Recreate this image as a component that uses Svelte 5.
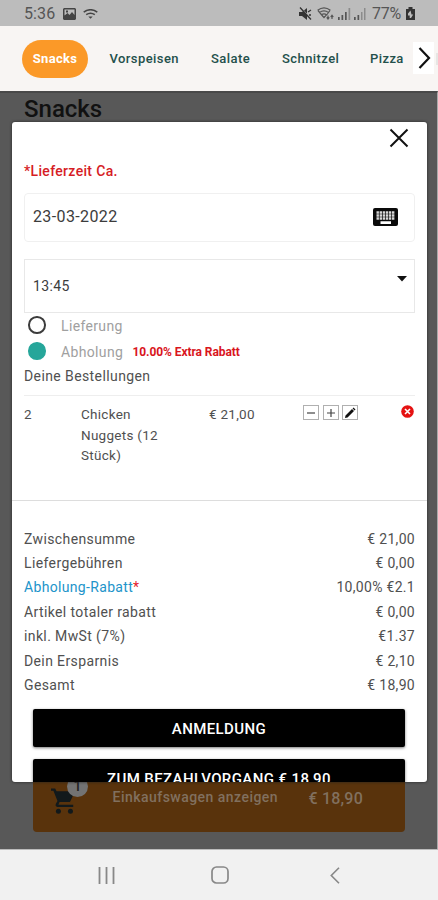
<script>
  const tabs = ['Vorspeisen', 'Salate', 'Schnitzel', 'Pizza'];
  const totals = [
    { label: 'Zwischensumme', value: '€ 21,00' },
    { label: 'Liefergebühren', value: '€ 0,00' },
    { label: 'Abholung-Rabatt', value: '10,00% €2.1', link: true },
    { label: 'Artikel totaler rabatt', value: '€ 0,00' },
    { label: 'inkl. MwSt (7%)', value: '€1.37' },
    { label: 'Dein Ersparnis', value: '€ 2,10' },
    { label: 'Gesamt', value: '€ 18,90' }
  ];
</script>

<div class="phone">
  <header class="status">
    <span class="clock">5:36</span>
    <svg class="photo" width="13" height="12" viewBox="0 0 13 12"><path fill="#444" fill-rule="evenodd" d="M1 0h11l1 1v10l-1 1H1l-1-1V1zM1.500 1.500v6l3-2.500 2 2 2.500-3 2.500 3v-5.500zM3 2.500h2v2H3z" /></svg>
    <svg class="wifi" width="15" height="10" viewBox="0 0 15 10" fill="none" stroke="#444" stroke-width="1.500"><path d="M.7 3.200Q7.500-1.800 14.300 3.200M3.200 5.700q4.300-3 8.600 0" /><path d="M5.300 7.400h4.400L7.500 9.700z" fill="#444" stroke="none" /></svg>
    <div class="right">
      <svg width="13" height="14" viewBox="0 0 13 14"><path fill="#333" d="M0 5h3l5-4v12L3 9H0z" /><path d="M1.500 0l11 12" stroke="#bcbcbc" stroke-width="1" /><path d="M1 .5l11 12M9 5l3-2M10 8h2" fill="none" stroke="#333" stroke-width="1.300" /></svg>
      <svg class="wf" width="17" height="13" viewBox="0 0 17 13" fill="none" stroke="#555" stroke-width="1.200"><path d="M.6 3.200Q7 -1.600 13.400 3.200M2.500 5.500q4.500-3.200 9 0M4.500 7.800q2.500-1.700 5 0L7 10.500zM1 3.500l5 6M13 3.500l-3 4" /><path d="M11 8.500v3M9.700 10.300L11 12l1.300-1.700M15 12V8.500M13.700 10L15 8.300 16.300 10" /></svg>
      <svg class="sig" width="28" height="12" viewBox="0 0 28 12"><path fill="#555" d="M0 9h1.700v3H0zM3.500 7h1.700v5H3.500zM7 4h1.700v8H7zM16 9h1.700v3H16zM19.500 7h1.700v5h-1.700z" /><path fill="#8b8b8b" d="M10.500 0h1.700v12h-1.700zM23 4h1.500v8H23zM26 0h1.500v12H26z" /></svg>
      <span class="pct">77%</span>
      <svg class="bat" width="9" height="13" viewBox="0 0 9 13"><path fill="#333" fill-rule="evenodd" d="M2.500 0h4v2H9v11H0V2h2.500zM4.500 3.500L2 6.500v2h1.700V11H5L7.200 7.500H5.500z" /></svg>
    </div>
  </header>

  <nav class="tabs">
    <button class="active">Snacks</button>
    {#each tabs as t, i}
      <span class="tab t{i}">{t}</span>
    {/each}
    <div class="next">
      <svg width="13" height="24" viewBox="0 0 13 24" fill="none" stroke="#111" stroke-width="2.200"><path d="M1.500 2L11 12 1.500 22" /></svg>
    </div>
    <i class="cut"></i>
  </nav>

  <main class="page">
    <h1>Snacks</h1>
    <div class="cart">
      <svg class="trolley" width="25" height="27" viewBox="0 0 27 28"><path fill="#12191b" d="M0 0h4.500l1.500 3h20l-5.500 11.500H9.200L8 17.500h16V20H7q-3-.8-1.700-3.500L7 13.500 2.600 2.500H0z" /><circle cx="8" cy="24.600" r="2.700" fill="#12191b" /><circle cx="21" cy="24.600" r="2.700" fill="#12191b" /></svg>
      <span class="badge">1</span>
      <span class="show">Einkaufswagen anzeigen</span>
      <span class="sum">€ 18,90</span>
    </div>

    <section class="modal">
      <div class="close">
        <svg width="20" height="20" viewBox="0 0 20 20" stroke="#111" stroke-width="2"><path d="M1.500 1.500l17 17M18.500 1.500l-17 17" /></svg>
      </div>
      <div class="when">*Lieferzeit Ca.</div>
      <div class="date">
        <span>23-03-2022</span>
        <svg width="25" height="18" viewBox="0 0 25 18"><rect width="25" height="18" rx="2" fill="#0a0a0a" /><path d="M3.500 4.500h18M3.500 7.500h18M3.500 10.500h18" stroke="#d8d8d8" stroke-width="2.300" stroke-dasharray="2.400 .7" /><path d="M7.500 13.200h10.500V16H7.500z" fill="#fff" /></svg>
      </div>
      <div class="time">
        <span>13:45</span>
        <svg width="10" height="6" viewBox="0 0 10 6"><path d="M0 0h10L5 5.500z" fill="#111" /></svg>
      </div>
      <div class="option"><i class="radio"></i><span>Lieferung</span></div>
      <div class="option"><i class="radio on"></i><span class="pick">Abholung</span><b>10.00% Extra Rabatt</b></div>
      <div class="orders">Deine Bestellungen</div>
      <div class="item">
        <span class="qty">2</span>
        <span class="name">Chicken<br />Nuggets (12<br />Stück)</span>
        <span class="price">€ 21,00</span>
        <div class="tools">
          <i><svg width="10" height="10" viewBox="0 0 10 10"><path d="M1 5h8" stroke="#444" stroke-width="1.200" /></svg></i>
          <i><svg width="10" height="10" viewBox="0 0 10 10"><path d="M1 5h8M5 1v8" stroke="#444" stroke-width="1.200" /></svg></i>
          <i><svg width="12" height="12" viewBox="0 0 12 12"><path d="M1 11l.5-2.500 6.500-6.500 2 2-6.500 6.500zM8.600 1.400L9.500.5l2 2-.9.900z" fill="#111" /></svg></i>
        </div>
        <svg class="del" width="13" height="13" viewBox="0 0 13 13"><circle cx="6.500" cy="6.500" r="6.300" fill="#e51212" /><path d="M4 4l5 5M9 4L4 9" stroke="#fff" stroke-width="1.600" /></svg>
      </div>
      <div class="totals">
        {#each totals as row}
          <div class="row"><span class:link={row.link}>{row.label}{#if row.link}<em>*</em>{/if}</span><span class="val">{row.value}</span></div>
        {/each}
      </div>
      <button class="cta">ANMELDUNG</button>
      <button class="cta">ZUM BEZAHLVORGANG € 18,90</button>
    </section>
  </main>

  <footer class="nav">
    <svg width="18" height="17" viewBox="0 0 18 17" stroke="#888" stroke-width="1.800"><path d="M1.500 0v17M8.500 0v17M15.500 0v17" /></svg>
    <svg class="home" width="18" height="18" viewBox="0 0 18 18" fill="none" stroke="#888" stroke-width="1.700"><rect x="1" y="1" width="16" height="16" rx="4.500" /></svg>
    <svg width="10" height="17" viewBox="0 0 10 17" fill="none" stroke="#888" stroke-width="1.600"><path d="M9 .8L1.300 8.500 9 16.200" /></svg>
  </footer>
</div>

<style>
  :global(body) { margin: 0; background: #f1f1f1; }
  .phone { width: 438px; height: 900px; overflow: hidden; display: flex; flex-direction: column; font-family: Roboto, "Liberation Sans", sans-serif; color: #505050; font-size: 14px; }
  .phone * { box-sizing: border-box; }
  span, b, h1, button { white-space: nowrap; }
  svg { display: block; flex: none; }
  .status { height: 26px; flex: none; background: #bcbcbc; display: flex; align-items: center; padding: 1px 23px 0 24px; color: #555; }
  .clock { font-size: 16px; letter-spacing: .1px; width: 39px; }
  .wifi { margin-left: 7px; }
  .right { margin-left: auto; display: flex; align-items: center; }
  .wf { margin-left: 5px; }
  .sig { margin-left: 4px; }
  .pct { font-size: 16px; margin-left: 6px; width: 29px; letter-spacing: -.3px; }
  .bat { margin-left: 5px; }
  .tabs { height: 65px; flex: none; background: #f8f5f3; display: flex; align-items: center; padding-left: 22px; position: relative; font-size: 13px; font-weight: 500; }
  .active { width: 66px; height: 38px; border: 0; border-radius: 19px; background: #fb9928; color: #fff; font: 700 13px Roboto, sans-serif; padding: 0; letter-spacing: .3px; }
  .tab { color: #24504b; letter-spacing: .42px; }
  .t0 { margin-left: 21.500px; width: 101.500px; }
  .t1 { width: 71px; }
  .t2 { width: 88px; }
  .next { position: absolute; left: 413px; top: 16px; width: 21px; height: 32px; background: #fff; display: flex; align-items: center; justify-content: center; padding-left: 2px; }
  .cut { position: absolute; left: 436px; top: 27px; width: 2px; height: 12px; background: #e7e6e4; }
  .page { height: 758px; flex: none; position: relative; background: #585858; border-right: 1px solid #aaa; border-top: 2px solid #494949; padding: 2px 33px 0 24px; display: flex; flex-direction: column; }
  h1 { margin: 0; font-size: 24px; line-height: 28px; font-weight: 500; color: #111; }
  .cart { margin: auto -1px 17px 9px; width: 372px; height: 90px; border-radius: 4px; background: #59330c; position: relative; display: flex; align-items: center; color: #81705f; font-weight: 500; }
  .trolley { position: absolute; left: 18px; top: 46px; }
  .badge { position: absolute; left: 34px; top: 34px; width: 21px; height: 21px; border-radius: 50%; background: #737373; color: #222; text-align: center; font-size: 14px; line-height: 20px; }
  .show { margin: 19px 0 0 79.500px; font-size: 14px; letter-spacing: .47px; width: 196px; }
  .sum { margin-top: 22px; font-size: 16px; letter-spacing: .2px; }
  .modal { position: absolute; left: 12px; top: 29px; width: 415px; height: 660px; background: #fff; border-radius: 3px; overflow: hidden; box-shadow: 0 0 3px #222; padding: 0 12px 0 11px; }
  .close { height: 40px; padding: 6px 6px 0; display: flex; justify-content: flex-end; }
  .when { color: #d61d25; font-weight: 500; font-size: 14px; line-height: 18px; letter-spacing: .33px; padding-left: 1px; }
  .date { margin-top: 13px; height: 49px; border: 1px solid #f0f0f0; border-radius: 4px; padding: 0 16px 2px 8px; display: flex; align-items: center; justify-content: space-between; font-size: 16px; color: #3c3c3c; width: 391px; margin-left: 1px; letter-spacing: .38px; }
  .time { margin: 17px 0 0 1px; width: 391px; height: 54px; border: 1px solid #e8e8e8; padding: 0 7px 0 8px; display: flex; justify-content: space-between; font-size: 14px; color: #3c3c3c; }
  .time span { margin-top: 17px; line-height: 18px; letter-spacing: .35px; }
  .time svg { margin-top: 16px; }
  .option { height: 26px; padding-left: 5px; display: flex; align-items: center; color: #a0a0a0; letter-spacing: .35px; }
  .option span { margin-top: -1px; }
  .radio { width: 17.500px; height: 17.500px; border: 2px solid #3c3c3c; border-radius: 50%; margin: -2px 15.500px 0 0; }
  .radio.on { background: #26a69a; border-color: #26a69a; }
  .option b { color: #d9151d; font-size: 12px; font-weight: 700; letter-spacing: -.08px; }
  .option .pick { width: 71.500px; }
  .orders { line-height: 20px; margin: 1px 0 0 1px; letter-spacing: .4px; padding-bottom: 9px; border-bottom: 1px solid #eee; }
  .item { height: 105px; margin: 0 -12px 0 -11px; padding: 8px 12px 0 11px; border-bottom: 1px solid #ddd; display: flex; align-items: flex-start; line-height: 20.700px; letter-spacing: .27px; font-size: 13.500px; }
  .qty { width: 58px; padding-left: 1px; }
  .name { width: 128px; }
  .price { width: 94px; }
  .tools { display: flex; gap: 3.500px; width: 98px; margin-top: 1px; }
  .tools i { width: 16px; height: 15px; border: 1px solid #b0b0b0; display: grid; place-items: center; }
  .del { margin-top: 1px; }
  .totals { padding: 25.500px 0 0 1px; }
  .row { display: flex; justify-content: space-between; height: 24.450px; line-height: 24.450px; letter-spacing: .38px; }
  .val { letter-spacing: .3px; }
  .link { color: #2294ca; letter-spacing: .33px; }
  em { color: #e31b2b; font-style: normal; }
  .cta { display: block; width: 372px; height: 38px; margin: 12px 0 0 10px; border: 0; border-radius: 2px; background: #000; color: #fff; font: 500 15px Roboto, sans-serif; letter-spacing: .4px; box-shadow: 0 1px 3px #777; padding: 2px 0 0; }
  .totals + .cta { margin-top: 11px; }
  .nav { flex: 1; background: #f1f1f1; border-top: 1px solid #bbb; display: flex; align-items: center; padding: 0 98px; justify-content: space-between; }
  .home { margin-right: 6px; }
</style>
